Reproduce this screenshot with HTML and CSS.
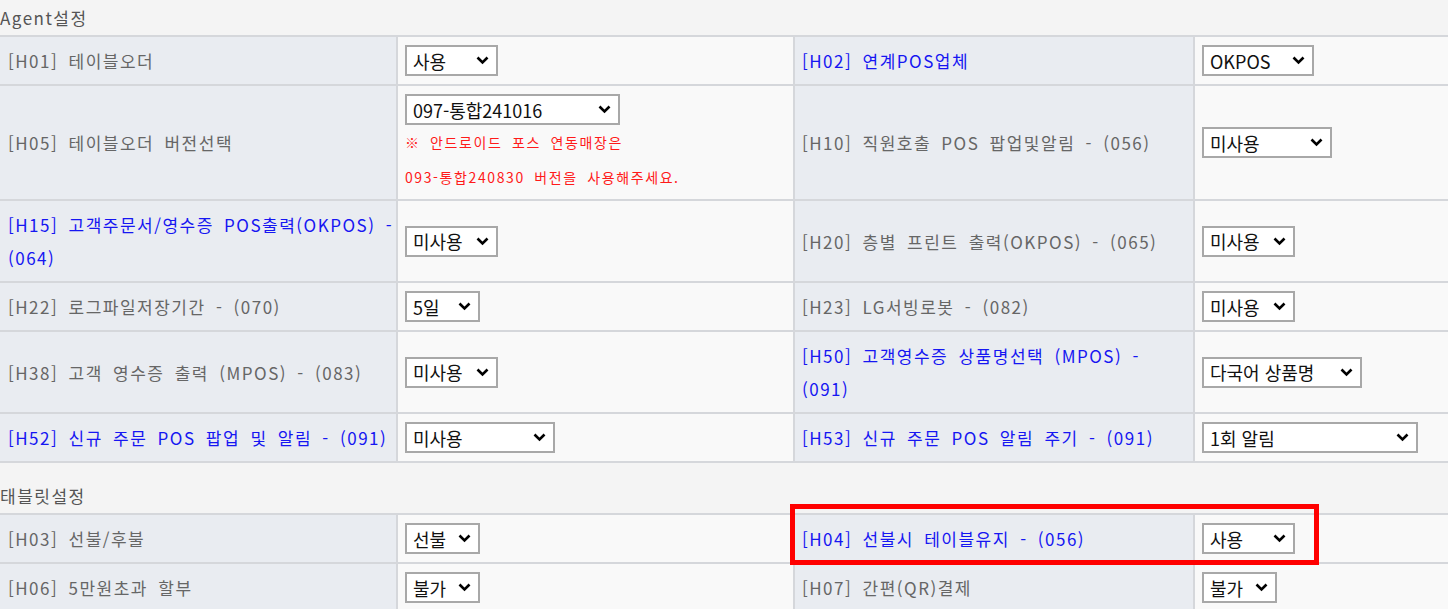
FILE: index.html
```html
<!DOCTYPE html>
<html lang="ko">
<head>
    <meta charset="UTF-8" />
    <meta name="viewport" content="width=device-width, initial-scale=1.0"/>
    <title>매장 설정</title>
    <link rel="stylesheet" href="styles.css">
</head>
<body>
    <div class="section">
        <h2 class="section-title">Agent설정</h2>
        <table class="opt-table">
            <colgroup>
                <col class="col-label"><col class="col-value"><col class="col-label2"><col class="col-value2">
            </colgroup>
            <tr>
                <th>[H01] 테이블오더</th>
                <td><select class="w93"><option>사용</option><option>미사용</option></select></td>
                <th class="link">[H02] 연계POS업체</th>
                <td><select class="w112"><option>OKPOS</option></select></td>
            </tr>
            <tr>
                <th>[H05] 테이블오더 버전선택</th>
                <td class="has-notice">
                    <select class="w215"><option>097-통합241016</option></select>
                    <p class="notice">※ 안드로이드 포스 연동매장은</p>
                    <p class="notice">093-통합240830 버전을 사용해주세요.</p>
                </td>
                <th>[H10] 직원호출 POS 팝업및알림 - (056)</th>
                <td><select class="w130"><option>미사용</option></select></td>
            </tr>
            <tr>
                <th class="link">[H15] 고객주문서/영수증 POS출력(OKPOS) -<br>(064)</th>
                <td><select class="w93"><option>미사용</option></select></td>
                <th>[H20] 층별 프린트 출력(OKPOS) - (065)</th>
                <td><select class="w93"><option>미사용</option></select></td>
            </tr>
            <tr>
                <th>[H22] 로그파일저장기간 - (070)</th>
                <td><select class="w75"><option>5일</option></select></td>
                <th>[H23] LG서빙로봇 - (082)</th>
                <td><select class="w93"><option>미사용</option></select></td>
            </tr>
            <tr>
                <th>[H38] 고객 영수증 출력 (MPOS) - (083)</th>
                <td><select class="w93"><option>미사용</option></select></td>
                <th class="link">[H50] 고객영수증 상품명선택 (MPOS) -<br>(091)</th>
                <td><select class="w160"><option>다국어 상품명</option></select></td>
            </tr>
            <tr>
                <th class="link">[H52] 신규 주문 POS 팝업 및 알림 - (091)</th>
                <td><select class="w150"><option>미사용</option></select></td>
                <th class="link">[H53] 신규 주문 POS 알림 주기 - (091)</th>
                <td><select class="w216"><option>1회 알림</option></select></td>
            </tr>
        </table>
    </div>

    <div class="section">
        <h2 class="section-title">태블릿설정</h2>
        <div class="table-wrap">
            <table class="opt-table">
                <colgroup>
                    <col class="col-label"><col class="col-value"><col class="col-label2"><col class="col-value2">
                </colgroup>
                <tr>
                    <th>[H03] 선불/후불</th>
                    <td><select class="w75"><option>선불</option></select></td>
                    <th class="link">[H04] 선불시 테이블유지 - (056)</th>
                    <td><select class="w93"><option>사용</option></select></td>
                </tr>
                <tr>
                    <th>[H06] 5만원초과 할부</th>
                    <td><select class="w75"><option>불가</option></select></td>
                    <th>[H07] 간편(QR)결제</th>
                    <td><select class="w75"><option>불가</option></select></td>
                </tr>
            </table>
            <!-- 강조 표시 -->
            <div class="highlight"></div>
        </div>
    </div>
</body>
</html>
```

FILE: styles.css
```css
body {
    margin: 0;
    padding: 0;
    background: #f4f4f4;
    font-family: "Noto Sans CJK KR", "Noto Sans", sans-serif;
    color: #666;
}
.section {
    margin-bottom: 15px;
}
.section-title {
    margin: 0;
    font-size: 17px;
    font-weight: normal;
    letter-spacing: 1.5px;
    word-spacing: 4px;
    line-height: 35px;
    color: #555;
}
.opt-table {
    width: 100%;
    table-layout: fixed;
    border-collapse: collapse;
}
.col-label { width: 397px; }
.col-value { width: 397px; }
.col-label2 { width: 400px; }
.col-value2 { width: 254px; }
.opt-table th,
.opt-table td {
    border: 2px solid #d5d7db;
    vertical-align: middle;
    text-align: left;
}
.opt-table tr > :first-child {
    border-left: 0;
}
.opt-table tr > :last-child {
    border-right: 0;
}
.opt-table th {
    background: #e9ecf1;
    padding: 7px 2px 7px 8px;
    font-size: 17px;
    font-weight: normal;
    letter-spacing: 1.5px;
    word-spacing: 4px;
    line-height: 33px;
    color: #666;
}
.opt-table th.link {
    color: #1616f2;
}
.opt-table tr > th:nth-child(3) {
    padding-left: 7px;
}
.opt-table td {
    background: #f9f9f9;
    padding: 8px 7px;
}
.opt-table td.has-notice {
    padding-bottom: 4px;
}
select {
    appearance: none;
    -webkit-appearance: none;
    display: block;
    box-sizing: border-box;
    height: 31px;
    padding: 0 24px 0 6px;
    border: 2px solid #a8a8a8;
    border-radius: 0;
    background: #fff url("data:image/svg+xml,%3Csvg xmlns='http://www.w3.org/2000/svg' width='13' height='9' viewBox='0 0 13 9'%3E%3Cpath d='M1.5 1.5 L6.5 6.5 L11.5 1.5' fill='none' stroke='%23000' stroke-width='2.6'/%3E%3C/svg%3E") no-repeat right 7px center;
    font-family: "Noto Sans CJK KR", "Noto Sans", sans-serif;
    font-size: 18px;
    color: #111;
}
.w75 { width: 75px; }
.w93 { width: 93px; }
.w112 { width: 112px; }
.w130 { width: 130px; }
.w150 { width: 150px; }
.w160 { width: 160px; }
.w215 { width: 215px; }
.w216 { width: 216px; }
.notice {
    margin: 0;
    font-size: 14px;
    letter-spacing: 1.6px;
    word-spacing: 4px;
    line-height: 35px;
    color: #ff1a1a;
}
.table-wrap {
    position: relative;
}
.highlight {
    position: absolute;
    left: 790px;
    top: -9px;
    width: 529px;
    height: 61px;
    box-sizing: border-box;
    border: 5px solid #f00;
}
```
